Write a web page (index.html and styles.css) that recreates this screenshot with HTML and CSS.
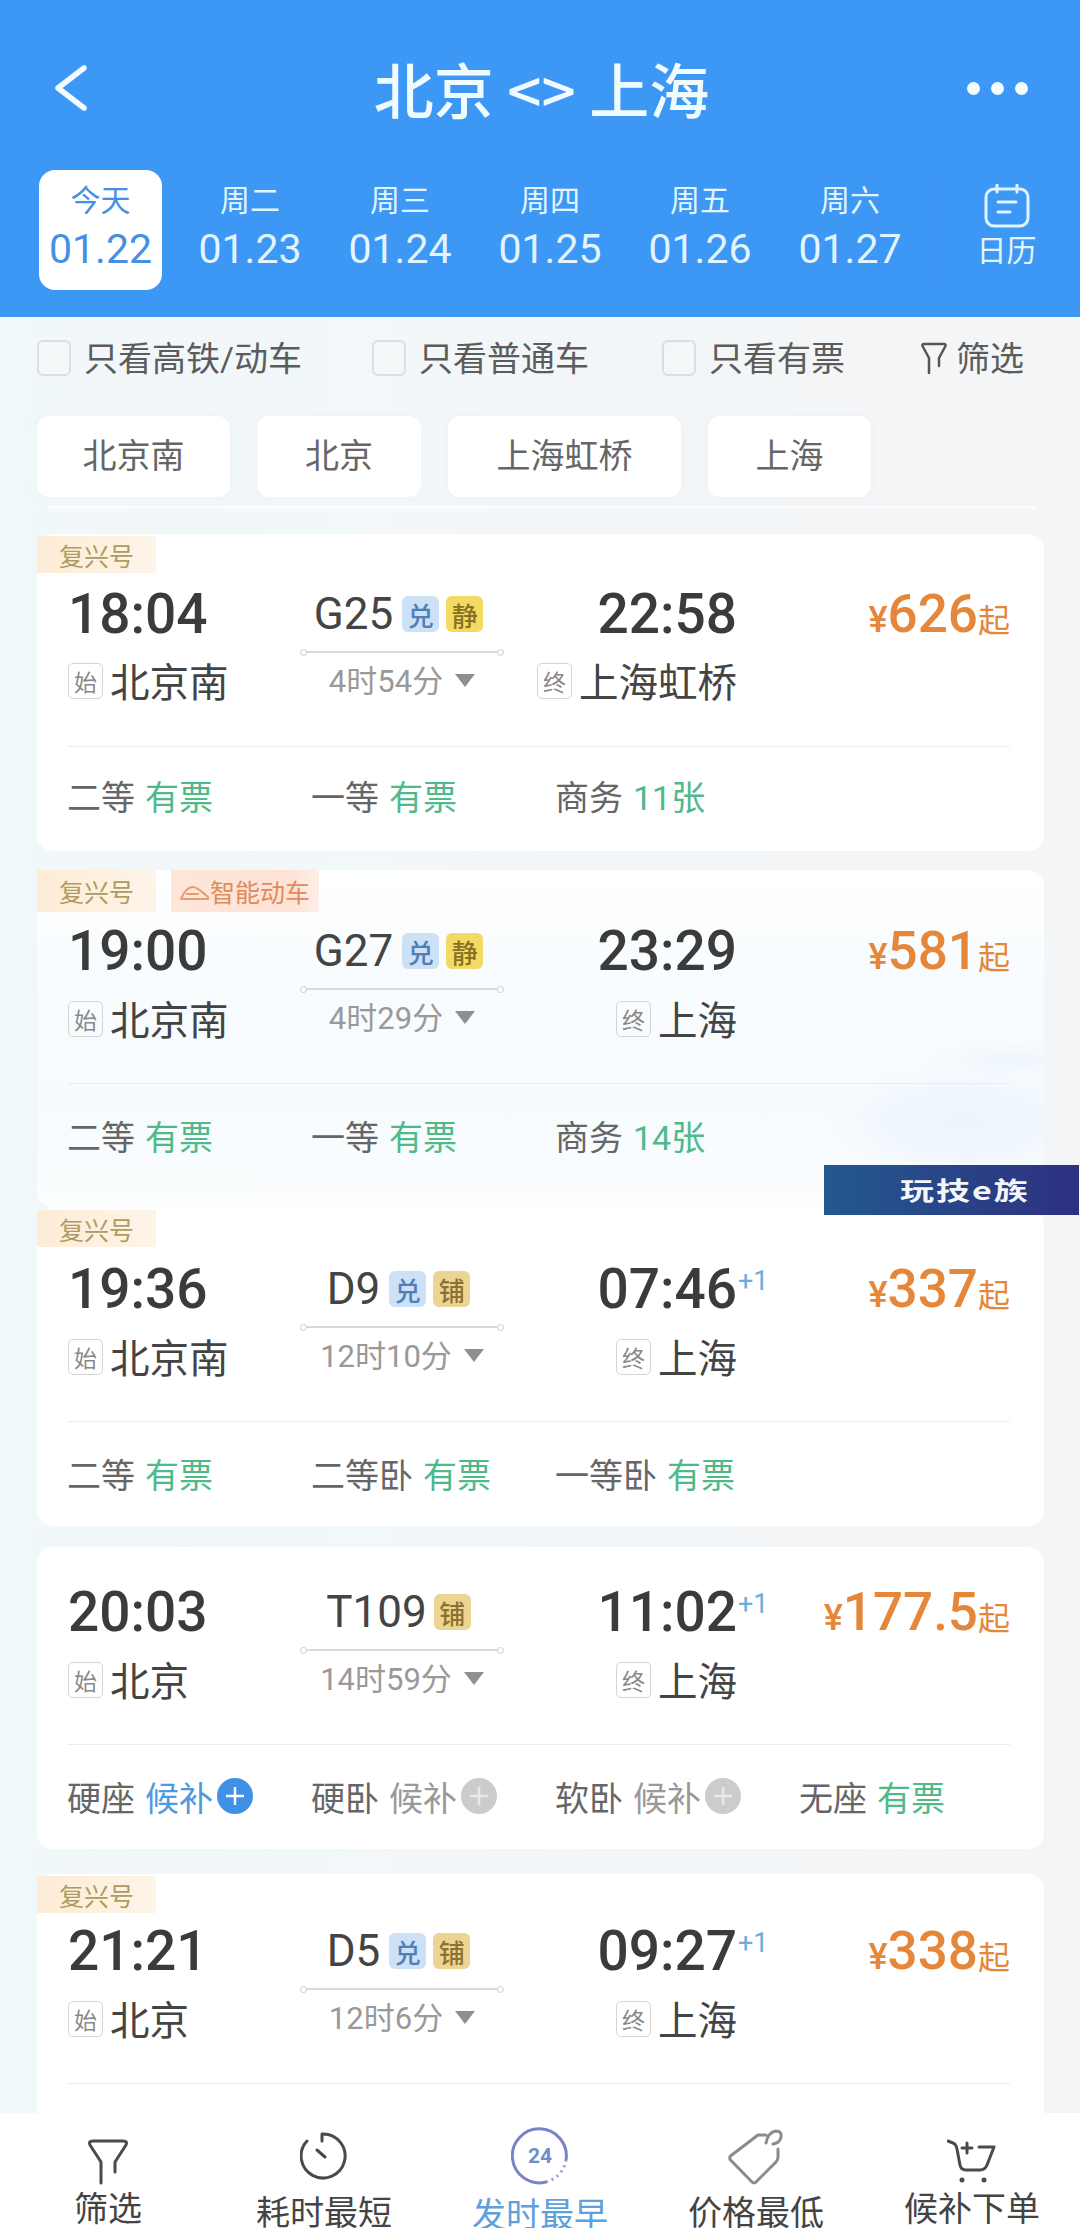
FILE: index.html
```html
<!DOCTYPE html>
<html lang="zh-CN">
<head>
<meta charset="utf-8">
<title>北京 &lt;&gt; 上海</title>
<link rel="stylesheet" href="styles.css">
</head>
<body>
<div class="page">
  <header class="header">
    <div class="nav">
      <svg class="back" viewBox="0 0 36 50" width="36" height="50"><path d="M29 5 3 25 29 45"/></svg>
      <h1 class="title">北京 &lt;&gt; 上海</h1>
      <div class="more"><i></i><i></i><i></i></div>
    </div>
    <div class="dates">
      <div class="date date-today"><span class="day">今天</span><span class="num">01.22</span></div>
      <div class="date"><span class="day">周二</span><span class="num">01.23</span></div>
      <div class="date"><span class="day">周三</span><span class="num">01.24</span></div>
      <div class="date"><span class="day">周四</span><span class="num">01.25</span></div>
      <div class="date"><span class="day">周五</span><span class="num">01.26</span></div>
      <div class="date"><span class="day">周六</span><span class="num">01.27</span></div>
      <div class="cal">
        <svg viewBox="0 0 46 44" width="46" height="44"><rect x="2" y="5" width="42" height="37" rx="8"/><path d="M13 1v7M33 1v7M14 18h18M14 28h12"/></svg>
        <span>日历</span>
      </div>
    </div>
  </header>

  <div class="filters">
    <label class="check"><i class="box"></i>只看高铁/动车</label>
    <label class="check"><i class="box"></i>只看普通车</label>
    <label class="check"><i class="box"></i>只看有票</label>
    <div class="check check-filter">
      <svg viewBox="0 0 26 32" width="26" height="32"><path d="M8 31V16L1.500 4Q1 2 3 2H23Q25 2 24.500 4L18 16V24"/></svg>筛选
    </div>
  </div>

  <div class="chips">
    <div class="chip">北京南</div>
    <div class="chip">北京</div>
    <div class="chip">上海虹桥</div>
    <div class="chip">上海</div>
  </div>
  <div class="strip"></div>

  <main class="list">
    <article class="card card-first">
      <div class="tags"><span class="tag">复兴号</span></div>
      <div class="route">
        <div class="time">18:04</div>
        <div class="train">G25<b class="bd bd-blue">兑</b><b class="bd bd-yellow">静</b></div>
        <div class="time time-arr">22:58</div>
        <div class="price"><small>¥</small>626<em>起</em></div>
        <div class="station"><i class="mark">始</i>北京南</div>
        <div class="dur">4时54分<i class="tri"></i></div>
        <div class="station station-arr"><i class="mark">终</i>上海虹桥</div>
      </div>
      <div class="divider"></div>
      <div class="tickets">
        <div class="tk">二等<span class="ok">有票</span></div>
        <div class="tk">一等<span class="ok">有票</span></div>
        <div class="tk">商务<span class="ok">11张</span></div>
      </div>
    </article>

    <article class="card card-smart">
      <div class="tags tags-tall">
        <span class="tag">复兴号</span>
        <span class="tag tag-smart"><svg viewBox="0 0 30 16" width="30" height="16"><path d="M1 14Q6 2 13 2Q17 2 28 12V14ZM6 9H19"/></svg>智能动车</span>
      </div>
      <div class="route">
        <div class="time">19:00</div>
        <div class="train">G27<b class="bd bd-blue">兑</b><b class="bd bd-yellow">静</b></div>
        <div class="time time-arr">23:29</div>
        <div class="price"><small>¥</small>581<em>起</em></div>
        <div class="station"><i class="mark">始</i>北京南</div>
        <div class="dur">4时29分<i class="tri"></i></div>
        <div class="station station-arr"><i class="mark">终</i>上海</div>
      </div>
      <div class="divider"></div>
      <div class="tickets">
        <div class="tk">二等<span class="ok">有票</span></div>
        <div class="tk">一等<span class="ok">有票</span></div>
        <div class="tk">商务<span class="ok">14张</span></div>
      </div>
    </article>

    <article class="card card-third">
      <div class="tags"><span class="tag">复兴号</span></div>
      <div class="route">
        <div class="time">19:36</div>
        <div class="train">D9<b class="bd bd-blue">兑</b><b class="bd bd-tan">铺</b></div>
        <div class="time time-arr">07:46<sup class="plus1">+1</sup></div>
        <div class="price"><small>¥</small>337<em>起</em></div>
        <div class="station"><i class="mark">始</i>北京南</div>
        <div class="dur">12时10分<i class="tri"></i></div>
        <div class="station station-arr"><i class="mark">终</i>上海</div>
      </div>
      <div class="divider"></div>
      <div class="tickets">
        <div class="tk">二等<span class="ok">有票</span></div>
        <div class="tk">二等卧<span class="ok">有票</span></div>
        <div class="tk">一等卧<span class="ok">有票</span></div>
      </div>
    </article>

    <article class="card card-plain">
      <div class="route">
        <div class="time">20:03</div>
        <div class="train">T109<b class="bd bd-tan">铺</b></div>
        <div class="time time-arr">11:02<sup class="plus1">+1</sup></div>
        <div class="price"><small>¥</small>177.5<em>起</em></div>
        <div class="station"><i class="mark">始</i>北京</div>
        <div class="dur">14时59分<i class="tri"></i></div>
        <div class="station station-arr"><i class="mark">终</i>上海</div>
      </div>
      <div class="divider"></div>
      <div class="tickets">
        <div class="tk">硬座<span class="wait">候补</span><svg class="add add-on" viewBox="0 0 36 36" width="36" height="36"><circle cx="18" cy="18" r="18"/><path d="M18 9v18M9 18h18"/></svg></div>
        <div class="tk">硬卧<span class="mute">候补</span><svg class="add" viewBox="0 0 36 36" width="36" height="36"><circle cx="18" cy="18" r="18"/><path d="M18 9v18M9 18h18"/></svg></div>
        <div class="tk">软卧<span class="mute">候补</span><svg class="add" viewBox="0 0 36 36" width="36" height="36"><circle cx="18" cy="18" r="18"/><path d="M18 9v18M9 18h18"/></svg></div>
        <div class="tk">无座<span class="ok">有票</span></div>
      </div>
    </article>

    <article class="card card-last">
      <div class="tags"><span class="tag">复兴号</span></div>
      <div class="route">
        <div class="time">21:21</div>
        <div class="train">D5<b class="bd bd-blue">兑</b><b class="bd bd-tan">铺</b></div>
        <div class="time time-arr">09:27<sup class="plus1">+1</sup></div>
        <div class="price"><small>¥</small>338<em>起</em></div>
        <div class="station"><i class="mark">始</i>北京</div>
        <div class="dur">12时6分<i class="tri"></i></div>
        <div class="station station-arr"><i class="mark">终</i>上海</div>
      </div>
      <div class="divider"></div>
    </article>
  </main>

  <div class="wm"><span>玩技e族</span></div>

  <nav class="bar">
    <div class="item">
      <div class="ico"><svg class="i-dark" viewBox="0 0 42 46" width="42" height="46"><path d="M14 44V23L3 6Q1 2 6 2H36Q41 2 39 6L28 23V33"/></svg></div>
      <span class="lb">筛选</span>
    </div>
    <div class="item item-low">
      <div class="ico ico-timer"><svg class="i-dark" viewBox="0 0 48 48" width="48" height="48"><path d="M23 2A22 22 0 1 1 7 9M22 2V9M17 18 25 25"/></svg></div>
      <span class="lb">耗时最短</span>
    </div>
    <div class="item item-on">
      <div class="ico">
        <svg class="i-24" viewBox="0 0 58 58" width="58" height="58">
          <path class="arc" d="M55 33A27 27 0 1 0 35 55"/>
          <path class="dots" d="M35 55A27 27 0 0 0 55 33"/>
          <text x="29" y="36" text-anchor="middle">24</text>
        </svg>
      </div>
      <span class="lb">发时最早</span>
    </div>
    <div class="item item-low">
      <div class="ico"><svg class="i-gray" viewBox="0 0 56 56" width="56" height="56"><path d="M30 6 2.500 27Q1 29 2.500 31L24 53Q26 55 28 53L48 33Q50 31 50 28V20M30 6H38M38 14Q40 3 48 2Q54 2 53 8Q52 14 45 15"/></svg></div>
      <span class="lb">价格最低</span>
    </div>
    <div class="item">
      <div class="ico"><svg class="i-dark" viewBox="0 0 50 46" width="50" height="46"><path d="M1 2 6 4Q9 5 10 10L13 26Q14 31 19 31H33Q38 31 40 26L47 8H32M20 4V14M15 9H25"/><path class="wheel" d="M15 41h.01M37 41h.01"/></svg></div>
      <span class="lb">候补下单</span>
    </div>
  </nav>
</div>
</body>
</html>
```

FILE: styles.css
```css
* { box-sizing: border-box; }
html, body { margin: 0; padding: 0; }
body { font-family: Roboto, "Noto Sans CJK SC", sans-serif; color: #444; }
i, em { font-style: normal; }
b { font-weight: 400; }

.page {
  position: relative;
  width: 1080px;
  height: 2228px;
  overflow: hidden;
  display: flex;
  flex-direction: column;
  background: linear-gradient(90deg, #f1f8fa, #f4f5f7);
}

/* header */
.header { flex: none; height: 317px; background: #3d97f5; color: #e2f5ff; }
.nav {
  height: 170px;
  padding: 6px 52px 0 55px;
  display: grid;
  grid-template-columns: 1fr auto 1fr;
  align-items: center;
}
.back { fill: none; stroke: #f2fbff; stroke-width: 5.500; stroke-linecap: round; stroke-linejoin: round; }
.title {
  margin: 0;
  font-size: 60px;
  font-weight: 500;
  line-height: 70px;
  color: #f0fbff;
  font-family: "Noto Sans CJK SC", sans-serif;
}
.more { justify-self: end; display: flex; gap: 11px; }
.more i { width: 13px; height: 13px; border-radius: 50%; background: #f5fcff; }

.dates { display: flex; padding-left: 25px; height: 120px; }
.date {
  width: 150px;
  display: flex;
  flex-direction: column;
  align-items: center;
  padding-top: 12px;
}
.day { font-size: 30px; line-height: 38px; }
.num { font-size: 41px; line-height: 54px; margin-top: 2px; }
.date-today {
  width: 123px;
  margin: 0 13px 0 14px;
  background: #fff;
  border-radius: 16px;
  color: #4491e4;
}
.cal {
  width: 155px;
  padding: 14px 0 0 8px;
  display: flex;
  flex-direction: column;
  align-items: center;
  font-size: 30px;
  line-height: 38px;
  background: linear-gradient(90deg, rgba(40, 110, 215, 0), rgba(40, 110, 215, .05) 8px, rgba(40, 110, 215, 0) 16px);
}
.cal svg { fill: none; stroke: #def4ff; stroke-width: 3; stroke-linecap: round; }
.cal span { margin-top: 4px; }

/* filter row */
.filters {
  flex: none;
  height: 82px;
  padding: 0 0 4px 37px;
  display: grid;
  grid-template-columns: 335px 290px 259px 1fr;
  align-items: center;
}
.check { display: flex; align-items: center; gap: 13px; font-size: 34px; color: #5c5c5c; }
.box {
  width: 34px;
  height: 36px;
  margin-top: 4px;
  border-radius: 6px;
  border: 2px solid #dcdddd;
  background: #f4f7f8;
}
.check-filter { gap: 9px; }
.check-filter svg { margin-top: 4px; fill: none; stroke: #555; stroke-width: 2.500; stroke-linecap: round; stroke-linejoin: round; }

/* station chips */
.chips {
  flex: none;
  margin-top: 17px;
  padding-left: 37px;
  display: grid;
  grid-template-columns: 193px 164px 233px 163px;
  column-gap: 27px;
}
.chip {
  height: 81px;
  padding-bottom: 6px;
  border-radius: 12px;
  background: #fff;
  display: flex;
  align-items: center;
  justify-content: center;
  font-size: 34px;
  color: #666;
  box-shadow: 0 0 6px rgba(235, 240, 245, .7);
}
.strip { flex: none; height: 3px; margin: 9px 44px 0 48px; background: #fbfcfd; }

/* list */
.list { flex: 1; min-height: 0; margin-top: 25px; overflow: hidden; }
.card {
  position: relative;
  width: 1007px;
  margin-left: 37px;
  background: #fff;
  border-radius: 16px;
}
.card-first { padding-top: 45px; margin-bottom: 19px; }
.card-first .divider { margin-top: 31px; }
.card-first .station { padding-bottom: 5px; }
.card-first .tickets { padding-bottom: 7px; }
.card-smart {
  padding: 46px 0 20px;
  background:
    radial-gradient(ellipse 135px 58px at 92% 75%, #edf5fc 0, rgba(237, 245, 252, .7) 55%, rgba(237, 245, 252, 0) 100%),
    radial-gradient(ellipse 90px 20px at 97% 56%, #eef5fb 0, rgba(238, 245, 251, 0) 100%),
    linear-gradient(180deg, #fff 0, #f8fcfe 30%, #f6fbfe 70%, #fbfdfe 100%);
}
.card-smart .divider { margin-top: 31px; }
.card-third { padding-top: 46px; margin-bottom: 21px; }
.card-third .divider { margin-top: 31px; }
.card-plain { padding-top: 30px; margin-bottom: 25px; }
.card-plain .divider { margin-top: 31px; }
.card-last { padding-top: 42px; height: 400px; }
.card-last .divider { margin-top: 31px; }

.tags { position: absolute; left: 0; top: 2px; display: flex; gap: 15px; height: 37px; }
.tags-tall { top: 0; height: 42px; }
.tag {
  width: 119px;
  display: flex;
  align-items: center;
  justify-content: center;
  font-size: 25px;
  color: #ae9a63;
  background: linear-gradient(90deg, #fdecd6, #fdf2e2 70%, #fdf5ea);
}
.tag-smart {
  width: 148px;
  gap: 0;
  color: #e08a5c;
  background: linear-gradient(90deg, #fde7d8, #fee2d6 80%, #fdeee8);
}
.tag-smart svg { margin-top: 4px; fill: none; stroke: #e89a70; stroke-width: 2; stroke-linejoin: round; }

.route {
  padding-left: 31px;
  display: grid;
  grid-template-columns: 232px 205px 232px 273px;
  grid-template-rows: 70px 66px;
  align-items: center;
}
.time { font-size: 55px; font-weight: 500; line-height: 70px; color: #3b3b3b; }
.time-arr { position: relative; text-align: right; }
.plus1 {
  position: absolute;
  left: 100%;
  top: 12px;
  margin-left: 1px;
  font-size: 27px;
  font-weight: 400;
  line-height: 30px;
  color: #6aaddd;
}
.train {
  display: flex;
  justify-content: center;
  align-items: center;
  padding-right: 8px;
  font-size: 44px;
  color: #444;
}
.bd {
  width: 37px;
  height: 36px;
  margin-left: 7px;
  border-radius: 6px;
  display: flex;
  align-items: center;
  justify-content: center;
  font-size: 26px;
  font-weight: 500;
}
.bd-blue { background: #cce0f6; color: #4f7fb5; margin-left: 9px; }
.bd-yellow { background: #f2da63; color: #8a7124; }
.bd-tan { background: #ecd493; color: #8e7130; }
.price {
  text-align: right;
  font-size: 53px;
  font-weight: 500;
  line-height: 70px;
  padding-top: 6px;
  color: #e5873a;
}
.price small { font-size: 36px; }
.price em { font-size: 32px; font-weight: 400; }
.station {
  display: flex;
  align-items: center;
  gap: 7px;
  padding-bottom: 3px;
  font-size: 39.500px;
  color: #444;
  white-space: nowrap;
}
.station-arr { justify-content: flex-end; }
.mark {
  width: 35px;
  height: 36px;
  margin-top: 3px;
  border: 1.500px solid #d5d5d5;
  border-radius: 5px;
  display: flex;
  align-items: center;
  justify-content: center;
  font-size: 23px;
  color: #888;
}
.dur {
  position: relative;
  align-self: start;
  margin-top: 2px;
  padding: 3px 0 0;
  border-top: 2px solid #d8dadc;
  height: 50px;
  width: 204px;
  display: flex;
  justify-content: center;
  align-items: center;
  gap: 12px;
  font-size: 31px;
  color: #999;
}
.dur::before, .dur::after {
  content: "";
  position: absolute;
  top: -4px;
  width: 5px;
  height: 5px;
  border-radius: 50%;
  background: #fff;
  border: 1px solid #c9cbcd;
}
.dur::before { left: 0; }
.dur::after { right: 0; }
.tri {
  width: 0;
  height: 0;
  border-left: 10px solid transparent;
  border-right: 10px solid transparent;
  border-top: 13px solid #8f8f8f;
  margin-top: 4px;
}
.divider { margin: 32px 34px 0 31px; height: 1px; background: #ececec; }
.card-smart .divider { background: #eaeef1; }
.tickets {
  height: 104px;
  padding: 0 0 2px 30px;
  display: grid;
  grid-template-columns: repeat(4, 244px);
  align-items: center;
}
.tk { display: flex; align-items: center; gap: 10px; font-size: 34px; color: #666; }
.ok { color: #4fb98a; }
.wait { color: #4d9ae0; }
.mute { color: #999; }
.add { margin-left: -6px; fill: #ccc; }
.add path { stroke: #e9e9e9; stroke-width: 2.500; fill: none; }
.add-on { fill: #3e90e8; }
.add-on path { stroke: #fff; }

/* watermark */
.wm {
  position: absolute;
  left: 824px;
  top: 1165px;
  width: 255px;
  height: 50px;
  padding-left: 76px;
  display: flex;
  align-items: center;
  background: linear-gradient(90deg, #23598f, #2e3080);
  color: #f4f6fa;
}
.wm span {
  font-family: "Noto Sans CJK SC", sans-serif;
  font-size: 34px;
  font-weight: 700;
  letter-spacing: 2px;
  line-height: 50px;
  transform: scaleY(.72);
}

/* bottom bar */
.bar {
  position: absolute;
  left: 0;
  right: 0;
  bottom: 0;
  height: 115px;
  padding-top: 15px;
  background: #fff;
  display: grid;
  grid-template-columns: repeat(5, 216px);
}
.item { display: flex; flex-direction: column; align-items: center; }
.ico { height: 60px; padding-bottom: 3px; display: flex; align-items: flex-end; }
.ico-timer { padding-bottom: 8px; }
.lb { font-size: 34px; line-height: 40px; margin-top: 1px; color: #444; white-space: nowrap; }
.item-low .lb { margin-top: 5px; }
.item-on .lb { margin-top: 7px; color: #5da0dc; }
.i-dark, .i-gray { fill: none; stroke: #4a4a4a; stroke-width: 3; stroke-linecap: round; stroke-linejoin: round; }
.i-gray { stroke: #8b8b8b; }
.wheel { stroke-width: 5; }
.i-24 { fill: none; }
.i-24 .arc { stroke: #7a83c6; stroke-width: 3; stroke-linecap: round; }
.i-24 .dots { stroke: #9aa0cf; stroke-width: 3; stroke-dasharray: 2 4; }
.i-24 text { fill: #6d8fcf; stroke: none; font-size: 21px; font-weight: 700; font-family: Roboto, sans-serif; }
```
